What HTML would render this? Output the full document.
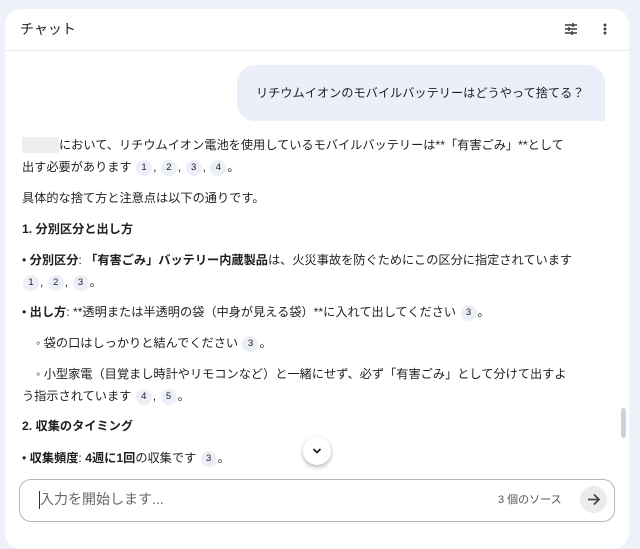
<!DOCTYPE html>
<html><head><meta charset="utf-8"><style>
body{margin:0;width:640px;height:533px;background:#eef0fa;font-family:"Liberation Sans","Noto Sans CJK JP",sans-serif;color:#1f1f1f;overflow:hidden;position:relative}
.card{position:absolute;left:5px;top:9px;width:624px;height:540px;background:#fff;border-radius:16px}
.hdr{position:absolute;left:0;top:0;width:624px;height:41px;border-bottom:1px solid #e8eaf0}
.t{position:absolute;font-size:12.2px;white-space:nowrap;line-height:18px}
.c{display:inline-block;width:16px;height:16px;border-radius:8px;background:#eceef8;font-size:9.5px;text-align:center;line-height:16px;vertical-align:1px;margin:0 1px}
b{font-weight:bold}
</style></head><body>
<div class="card">
<div class="hdr">
<div class="t" style="left:15px;top:11px;font-size:14px">チャット</div>
<svg style="position:absolute;left:559px;top:13px" width="14" height="14" viewBox="0 0 14 14"><g stroke="#444" stroke-width="1.6"><line x1="1" y1="3" x2="13" y2="3"/><line x1="1" y1="7" x2="13" y2="7"/><line x1="1" y1="11" x2="13" y2="11"/></g><g stroke="#444" stroke-width="1.6"><line x1="9" y1="1" x2="9" y2="5"/><line x1="5" y1="5" x2="5" y2="9"/><line x1="8" y1="9" x2="8" y2="13"/></g></svg>
<svg style="position:absolute;left:597px;top:13px" width="6" height="14"><circle cx="3" cy="3" r="1.5" fill="#444"/><circle cx="3" cy="7" r="1.5" fill="#444"/><circle cx="3" cy="11" r="1.5" fill="#444"/></svg>
</div>
<div style="position:absolute;left:232px;top:56px;width:368px;height:56px;background:#eceef9;border-radius:18px 18px 0 18px"></div>
<div class="t" style="left:251px;top:75px">リチウムイオンのモバイルバッテリーはどうやって捨てる？</div>
</div>
<div style="position:absolute;left:22px;top:137px;width:37px;height:16px;background:#eee"></div>
<div class="t" style="left:59px;top:136px">において、リチウムイオン電池を使用しているモバイルバッテリーは**「有害ごみ」**として</div>
<div class="t" style="left:22px;top:158px">出す必要があります <span class="c">1</span>, <span class="c">2</span>, <span class="c">3</span>, <span class="c">4</span>。</div>
<div class="t" style="left:22px;top:189px">具体的な捨て方と注意点は以下の通りです。</div>
<div class="t" style="left:22px;top:220px"><b>1. 分別区分と出し方</b></div>
<div class="t" style="left:22px;top:251px">• <b>分別区分</b>: <b>「有害ごみ」バッテリー内蔵製品</b>は、火災事故を防ぐためにこの区分に指定されています</div>
<div class="t" style="left:22px;top:273px"><span class="c">1</span>, <span class="c">2</span>, <span class="c">3</span>。</div>
<div class="t" style="left:22px;top:303px">• <b>出し方</b>: **透明または半透明の袋（中身が見える袋）**に入れて出してください <span class="c">3</span>。</div>
<div class="t" style="left:36px;top:334px">◦ 袋の口はしっかりと結んでください <span class="c">3</span>。</div>
<div class="t" style="left:36px;top:365px">◦ 小型家電（目覚まし時計やリモコンなど）と一緒にせず、必ず「有害ごみ」として分けて出すよ</div>
<div class="t" style="left:22px;top:387px">う指示されています <span class="c">4</span>, <span class="c">5</span>。</div>
<div class="t" style="left:22px;top:417px"><b>2. 収集のタイミング</b></div>
<div class="t" style="left:22px;top:449px">• <b>収集頻度</b>: <b>4週に1回</b>の収集です <span class="c">3</span>。</div>
<div style="position:absolute;left:621px;top:408px;width:5px;height:30px;background:#cfd2da;border-radius:3px"></div>
<div style="position:absolute;left:303px;top:437px;width:28px;height:28px;border-radius:14px;background:#fff;box-shadow:0 2px 5px rgba(0,0,0,.3)"></div>
<svg style="position:absolute;left:312px;top:447px" width="10" height="8"><path d="M1.5 2 L5 5.5 L8.5 2" stroke="#222" stroke-width="1.8" fill="none"/></svg>
<div style="position:absolute;left:19px;top:479px;width:594px;height:41px;border:1px solid #b5b7bd;border-radius:12px;background:#fff"></div>
<div style="position:absolute;left:39px;top:491px;width:1px;height:18px;background:#333"></div>
<div class="t" style="left:40px;top:490px;font-size:14px;color:#666">入力を開始します...</div>
<div class="t" style="left:498px;top:491px;font-size:11px;color:#555">3 個のソース</div>
<div style="position:absolute;left:580px;top:486px;width:27px;height:27px;border-radius:14px;background:#ebebeb"></div>
<svg style="position:absolute;left:586px;top:492px" width="15" height="15"><path d="M2 7.5 H13 M8 2.5 L13 7.5 L8 12.5" stroke="#444" stroke-width="1.7" fill="none"/></svg>
</body></html>
